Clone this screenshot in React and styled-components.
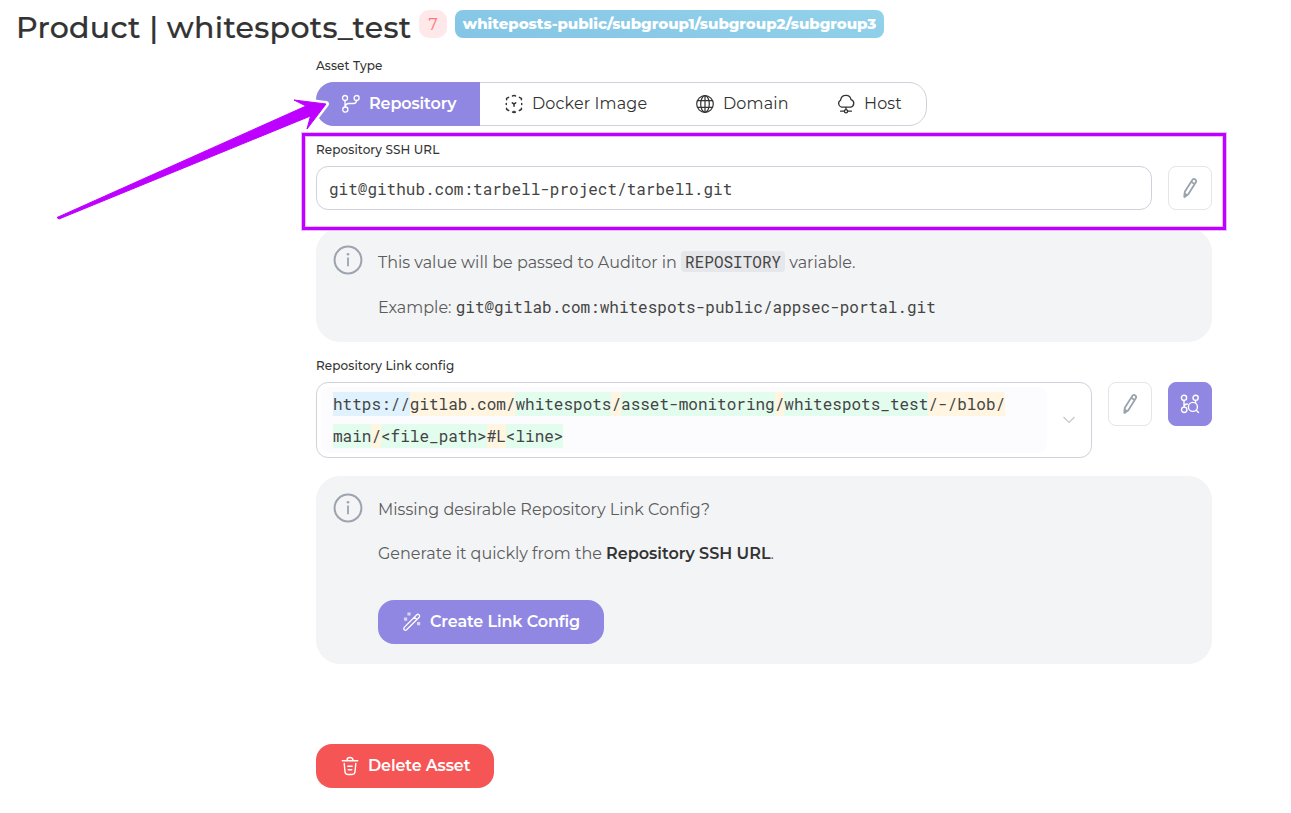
import React from "react";
import styled, { createGlobalStyle } from "styled-components";

const Global = createGlobalStyle`
  *, *::before { box-sizing: border-box; }
  body { margin: 0; background: #fff; color: #333; font-family: Montserrat, Inter, sans-serif; }
  button { font-family: inherit; }
`;

const Page = styled.div`
  position: relative;
  width: 1291px;
  height: 813px;
  overflow: hidden;
`;
const Header = styled.header`
  display: flex;
  align-items: flex-start;
  height: 56px;
  padding: 10px 0 0 16px;
`;
const Title = styled.h1`
  margin: 0;
  width: 403px;
  font-size: 30px;
  line-height: 36px;
  font-weight: 500;
  white-space: nowrap;
  letter-spacing: 0.31px;
  -webkit-text-stroke: 0.2px currentColor;
`;
const Count = styled.span`
  width: 28px;
  height: 28px;
  margin-right: 8px;
  border-radius: 10px;
  background: #ffe8e9;
  color: #ff7480;
  font: 17px/28px "DejaVu Serif", serif;
  text-align: center;
`;
const PathTag = styled.span`
  width: 429px;
  height: 28px;
  border-radius: 8px;
  background: linear-gradient(12deg, #84c5e6, #93d2ea);
  color: #fff;
  font-size: 15px;
  font-weight: 800;
  line-height: 28px;
  text-align: center;
  white-space: nowrap;
  letter-spacing: -0.03px;
`;
const Form = styled.main`
  display: flex;
  flex-direction: column;
  align-items: flex-start;
  width: 896px;
  margin-left: 316px;
`;
const Label = styled.div`
  height: 20px;
  margin-top: ${(p) => p.$top ?? 0}px;
  margin-bottom: 6px;
  font-size: 12px;
  line-height: 20px;
  font-weight: 500;
  white-space: nowrap;
  letter-spacing: 0.1px;
`;
const Tabs = styled.div`
  display: flex;
  width: 611px;
  height: 44px;
  margin-bottom: 14px;
  border: 1px solid #d1d1db;
  border-radius: 18px;
`;
const Tab = styled.button`
  display: flex;
  align-items: center;
  gap: ${(p) => p.$gap ?? 8}px;
  width: ${(p) => p.$w}px;
  height: 44px;
  margin: ${(p) => (p.$active ? "-1px 0 0 -1px" : "-1px 0 0")};
  padding: 0 0 0 ${(p) => p.$pad}px;
  border: 0;
  border-radius: ${(p) => (p.$active ? "18px 0 0 18px" : "0")};
  background: ${(p) => (p.$active ? "#9087e2" : "transparent")};
  color: ${(p) => (p.$active ? "#fff" : "#333")};
  font-size: 16px;
  font-weight: ${(p) => (p.$active ? 600 : 400)};
  white-space: nowrap;
  letter-spacing: ${(p) => (p.$active ? -0.12 : 0.14)}px;
`;
const Caption = styled.span`
  line-height: 20px;
`;
const Row = styled.div`
  display: flex;
  align-items: flex-start;
  gap: 16px;
  width: 100%;
  margin-bottom: 18px;
`;
const Input = styled.div`
  flex: 1;
  height: 44px;
  padding-left: 12px;
  border: 1px solid #d1d1db;
  border-radius: 12px;
  color: #444;
  font: 16px/44px "Roboto Mono", "Liberation Mono", monospace;
`;
const IconButton = styled.button`
  display: grid;
  place-items: center;
  width: 44px;
  height: 44px;
  padding: 0;
  border: 1px solid ${(p) => (p.$filled ? "#9087e2" : "#e5e5ea")};
  border-radius: 8px;
  background: ${(p) => (p.$filled ? "#9087e2" : "#fff")};
  color: ${(p) => (p.$filled ? "#fff" : "#9ca3af")};
`;
const Panel = styled.section`
  display: flex;
  width: 100%;
  height: ${(p) => p.$h}px;
  padding: 17px 17px 0;
  border-radius: 24px;
  background: #f3f4f6;
  color: #5c5c5c;
`;
const PanelBody = styled.div`
  display: flex;
  flex-direction: column;
  align-items: flex-start;
  margin-left: 15px;
  padding-top: ${(p) => p.$top}px;
`;
const Line = styled.p`
  margin: 0 0 ${(p) => p.$gap}px;
  font-size: 16px;
  font-weight: 400;
  line-height: 24px;
  white-space: nowrap;
  b { color: #333; font-weight: 600; }
`;
const Mono = styled.code`
  color: #444;
  font: 16px/21px "Roboto Mono", "Liberation Mono", monospace;
`;
const Chip = styled(Mono)`
  display: inline-block;
  padding: 0 4px;
  border-radius: 4px;
  background: #e6e7ea;
`;
const Select = styled.div`
  display: flex;
  align-items: center;
  flex: 1;
  height: 76px;
  padding: 4px;
  border: 1px solid #d1d1db;
  border-radius: 12px;
`;
const LinkValue = styled.div`
  width: 726px;
  height: 66px;
  padding: 1px 0 0 12px;
  border-radius: 8px;
  background: #fcfcfe;
  color: #444;
  font: 16px/32px "Roboto Mono", "Liberation Mono", monospace;
  white-space: nowrap;
`;
const colors = { blue: "#e0f2fe", sand: "#fff5e0", mint: "#e2fcee" };
const Part = styled.span`
  padding: 1px 0 2px;
  background: ${(p) => colors[p.$tone]};
`;
const ChevronSlot = styled.span`
  display: grid;
  margin-left: 15px;
  color: #c6c7cd;
`;
const Action = styled.button`
  display: flex;
  align-items: center;
  gap: 8px;
  width: ${(p) => p.$w}px;
  height: 44px;
  padding: 0 0 0 24px;
  border: 0;
  border-radius: 16px;
  background: ${(p) => (p.$danger ? "#f55555" : "#9087e2")};
  color: #fff;
  font-size: 16px;
  font-weight: 600;
  white-space: nowrap;
  letter-spacing: -0.12px;
`;
const Footer = styled.div`
  margin-top: 80px;
`;
const Highlight = styled.div`
  position: absolute;
  left: 301px;
  top: 132px;
  width: 926px;
  height: 99px;
  border: 1px solid #e9b8ff;
  &::before {
    content: "";
    display: block;
    height: 97px;
    border: 3px solid #bd00ff;
    box-shadow: inset 0 0 0 1px #e9b8ff;
  }
`;
const Arrow = styled.svg`
  position: absolute;
  left: 50px;
  top: 90px;
`;

const Svg = ({ size = 20, sw = 1.3, children }) => (
  <svg width={size} height={size} viewBox="0 0 20 20" fill="none" stroke="currentColor" strokeWidth={sw} strokeLinecap="round" strokeLinejoin="round">
    {children}
  </svg>
);
const BranchIcon = () => (
  <Svg>
    <circle cx="4" cy="4" r="2.5" /><circle cx="15.6" cy="4" r="2.5" /><circle cx="4.3" cy="15.6" r="2.6" />
    <path d="M4 6.5V13M4.3 13C4.5 10.2 6 9.5 8 9.5H12.5C14.7 9.5 15.5 8.5 15.6 6.5" />
  </Svg>
);
const DockerIcon = () => (
  <Svg sw={1.5}>
    <path d="M8.5 2 10 1.4 11.5 2M8.5 18 10 18.6 11.5 18M10 17.2V18M4.6 3.300 2.600 4.300V5.700M15.400 3.300 17.400 4.300V5.700M2.300 9.400V10.600M17.700 9.400V10.600M2.600 14.300V15.300L4.600 16.500M17.400 14.300V15.300L15.400 16.500M10 10V12.200M10 10 8.300 8.900M10 10 11.700 8.900" />
  </Svg>
);
const GlobeIcon = () => (
  <Svg sw={1.2}>
    <circle cx="10" cy="10" r="8.3" />
    <ellipse cx="10" cy="10" rx="4.3" ry="8.3" />
    <path d="M10 1.7V18.3M2.5 6.6H17.5M2.5 13.4H17.5" />
  </Svg>
);
const CloudIcon = () => (
  <Svg sw={1.3}>
    <path d="M5.5 13.2A3.8 3.8 0 0 1 4.6 6.2C5 3 7.2 1.4 10 1.4S14.6 3 15 5.6A3.9 3.9 0 0 1 14.3 13.2ZM10 13.2V15.5M4.6 17.2H8.3M11.7 17.2H15.4" />
    <circle cx="10" cy="17.2" r="1.6" />
  </Svg>
);
const PencilIcon = () => (
  <Svg sw={1.8}>
    <path d="M4.8 13.8 12.3 1.9C13 .8 14.2.7 15.2 1.4S16.4 3.2 15.8 4.2L8.3 16.2 4.5 18.9ZM11.2 3.8 14.6 5.9" />
    <path d="M4.7 15.5 6.7 16.9 4.5 18.6Z" fill="currentColor" />
  </Svg>
);
const BranchSearchIcon = () => (
  <Svg sw={1.4}>
    <circle cx="4" cy="3.8" r="2.6" /><circle cx="15.6" cy="3.8" r="2.6" /><circle cx="4.2" cy="15.8" r="2.7" />
    <path d="M4 6.4V13M4.2 12.5C4.4 10.6 5.5 10 7.5 10M15.6 6.4V8.3M16.3 16.3 18.5 18.5" />
    <circle cx="12.9" cy="12.9" r="4.5" />
  </Svg>
);
const InfoIcon = () => (
  <svg width="30" height="30" viewBox="0 0 30 30" fill="none" stroke="#9ca3af">
    <circle cx="15" cy="15" r="13.4" strokeWidth="2" />
    <path d="M15 12.5V21.3" strokeWidth="1.8" />
    <circle cx="15" cy="9.3" r="1.3" fill="#9ca3af" stroke="none" />
  </svg>
);
const WandIcon = () => (
  <Svg sw={1.3}>
    <path d="M2.2 15.4 14.8 2.8A1.7 1.7 0 0 1 17.2 5.2L4.6 17.8A1.7 1.7 0 0 1 2.2 15.4ZM12.4 5.2 14.8 7.6" />
    <path d="M5.4.4H8.600V3.600H5.400ZM2 5.600H5.200V8.800H2ZM15 10.100H18.200V13.300H15Z" fill="currentColor" stroke="none" opacity=".65" />
  </Svg>
);
const TrashIcon = () => (
  <Svg sw={1.4}>
    <path d="M2.3 4.7H17.7M7 4.5C7 2.3 7.5 1.5 10 1.5S13 2.3 13 4.5M4.2 7.4 5 15.8C5.2 17.7 6 18.5 7.8 18.5H12.2C14 18.5 14.8 17.7 15 15.8L15.8 7.4M7.8 10.3H12.2M8.2 13.7H11.8" />
  </Svg>
);

const arrowShape = "M57 217.5 306 106 294 100 326 104 307 129 310.5 116 59 219Z";

const linkLines = [
  [["blue", "https://"], ["sand", "gitlab.com/"], ["mint", "whitespots"], ["sand", "/"], ["mint", "asset-monitoring"], ["sand", "/"], ["mint", "whitespots_test"], ["sand", "/-/blob/"]],
  [["mint", "main"], ["sand", "/"], ["mint", "<file_path>"], ["sand", "#L"], ["mint", "<line>"]],
];

export default function App() {
  return (
    <Page>
      <Global />
      <Header>
        <Title>Product | whitespots_test</Title>
        <Count>7</Count>
        <PathTag>whiteposts-public/subgroup1/subgroup2/subgroup3</PathTag>
      </Header>
      <Form>
        <Label>Asset Type</Label>
        <Tabs>
          <Tab $active $w={164} $pad={25}><BranchIcon /><Caption>Repository</Caption></Tab>
          <Tab $w={191} $pad={24}><DockerIcon /><Caption>Docker Image</Caption></Tab>
          <Tab $w={141} $pad={24}><GlobeIcon /><Caption>Domain</Caption></Tab>
          <Tab $w={114} $pad={24}><CloudIcon /><Caption>Host</Caption></Tab>
        </Tabs>
        <Label>Repository SSH URL</Label>
        <Row>
          <Input>git@github.com:tarbell-project/tarbell.git</Input>
          <IconButton aria-label="Edit URL"><PencilIcon /></IconButton>
        </Row>
        <Panel $h={114}>
          <InfoIcon />
          <PanelBody $top={6}>
            <Line $gap={21}>This value will be passed to Auditor in <Chip>REPOSITORY</Chip> variable.</Line>
            <Line $gap={0}>Example: <Mono>git@gitlab.com:whitespots-public/appsec-portal.git</Mono></Line>
          </PanelBody>
        </Panel>
        <Label $top={14}>Repository Link config</Label>
        <Row>
          <Select>
            <LinkValue>
              {linkLines.map((line, i) => (
                <div key={i}>{line.map(([tone, text], j) => <Part key={j} $tone={tone}>{text}</Part>)}</div>
              ))}
            </LinkValue>
            <ChevronSlot>
              <svg width="14" height="10" viewBox="0 0 14 10" fill="none" stroke="currentColor" strokeWidth="1.2"><path d="M1.5 2 7 7.5 12.5 2" /></svg>
            </ChevronSlot>
          </Select>
          <IconButton aria-label="Edit link config"><PencilIcon /></IconButton>
          <IconButton $filled aria-label="Find link config"><BranchSearchIcon /></IconButton>
        </Row>
        <Panel $h={188}>
          <InfoIcon />
          <PanelBody $top={5}>
            <Line $gap={20}>Missing desirable Repository Link Config?</Line>
            <Line $gap={34}>Generate it quickly from the <b>Repository SSH URL</b>.</Line>
            <Action $w={226}><WandIcon /><Caption>Create Link Config</Caption></Action>
          </PanelBody>
        </Panel>
        <Footer>
          <Action $danger $w={178}><TrashIcon /><Caption>Delete Asset</Caption></Action>
        </Footer>
      </Form>
      <Highlight />
      <Arrow width="290" height="140" viewBox="50 90 290 140">
        <path d={arrowShape} stroke="#fff" strokeWidth="6" strokeLinejoin="round" />
        <path d={arrowShape} fill="#bd00ff" stroke="#bd00ff" strokeLinejoin="round" />
      </Arrow>
    </Page>
  );
}
